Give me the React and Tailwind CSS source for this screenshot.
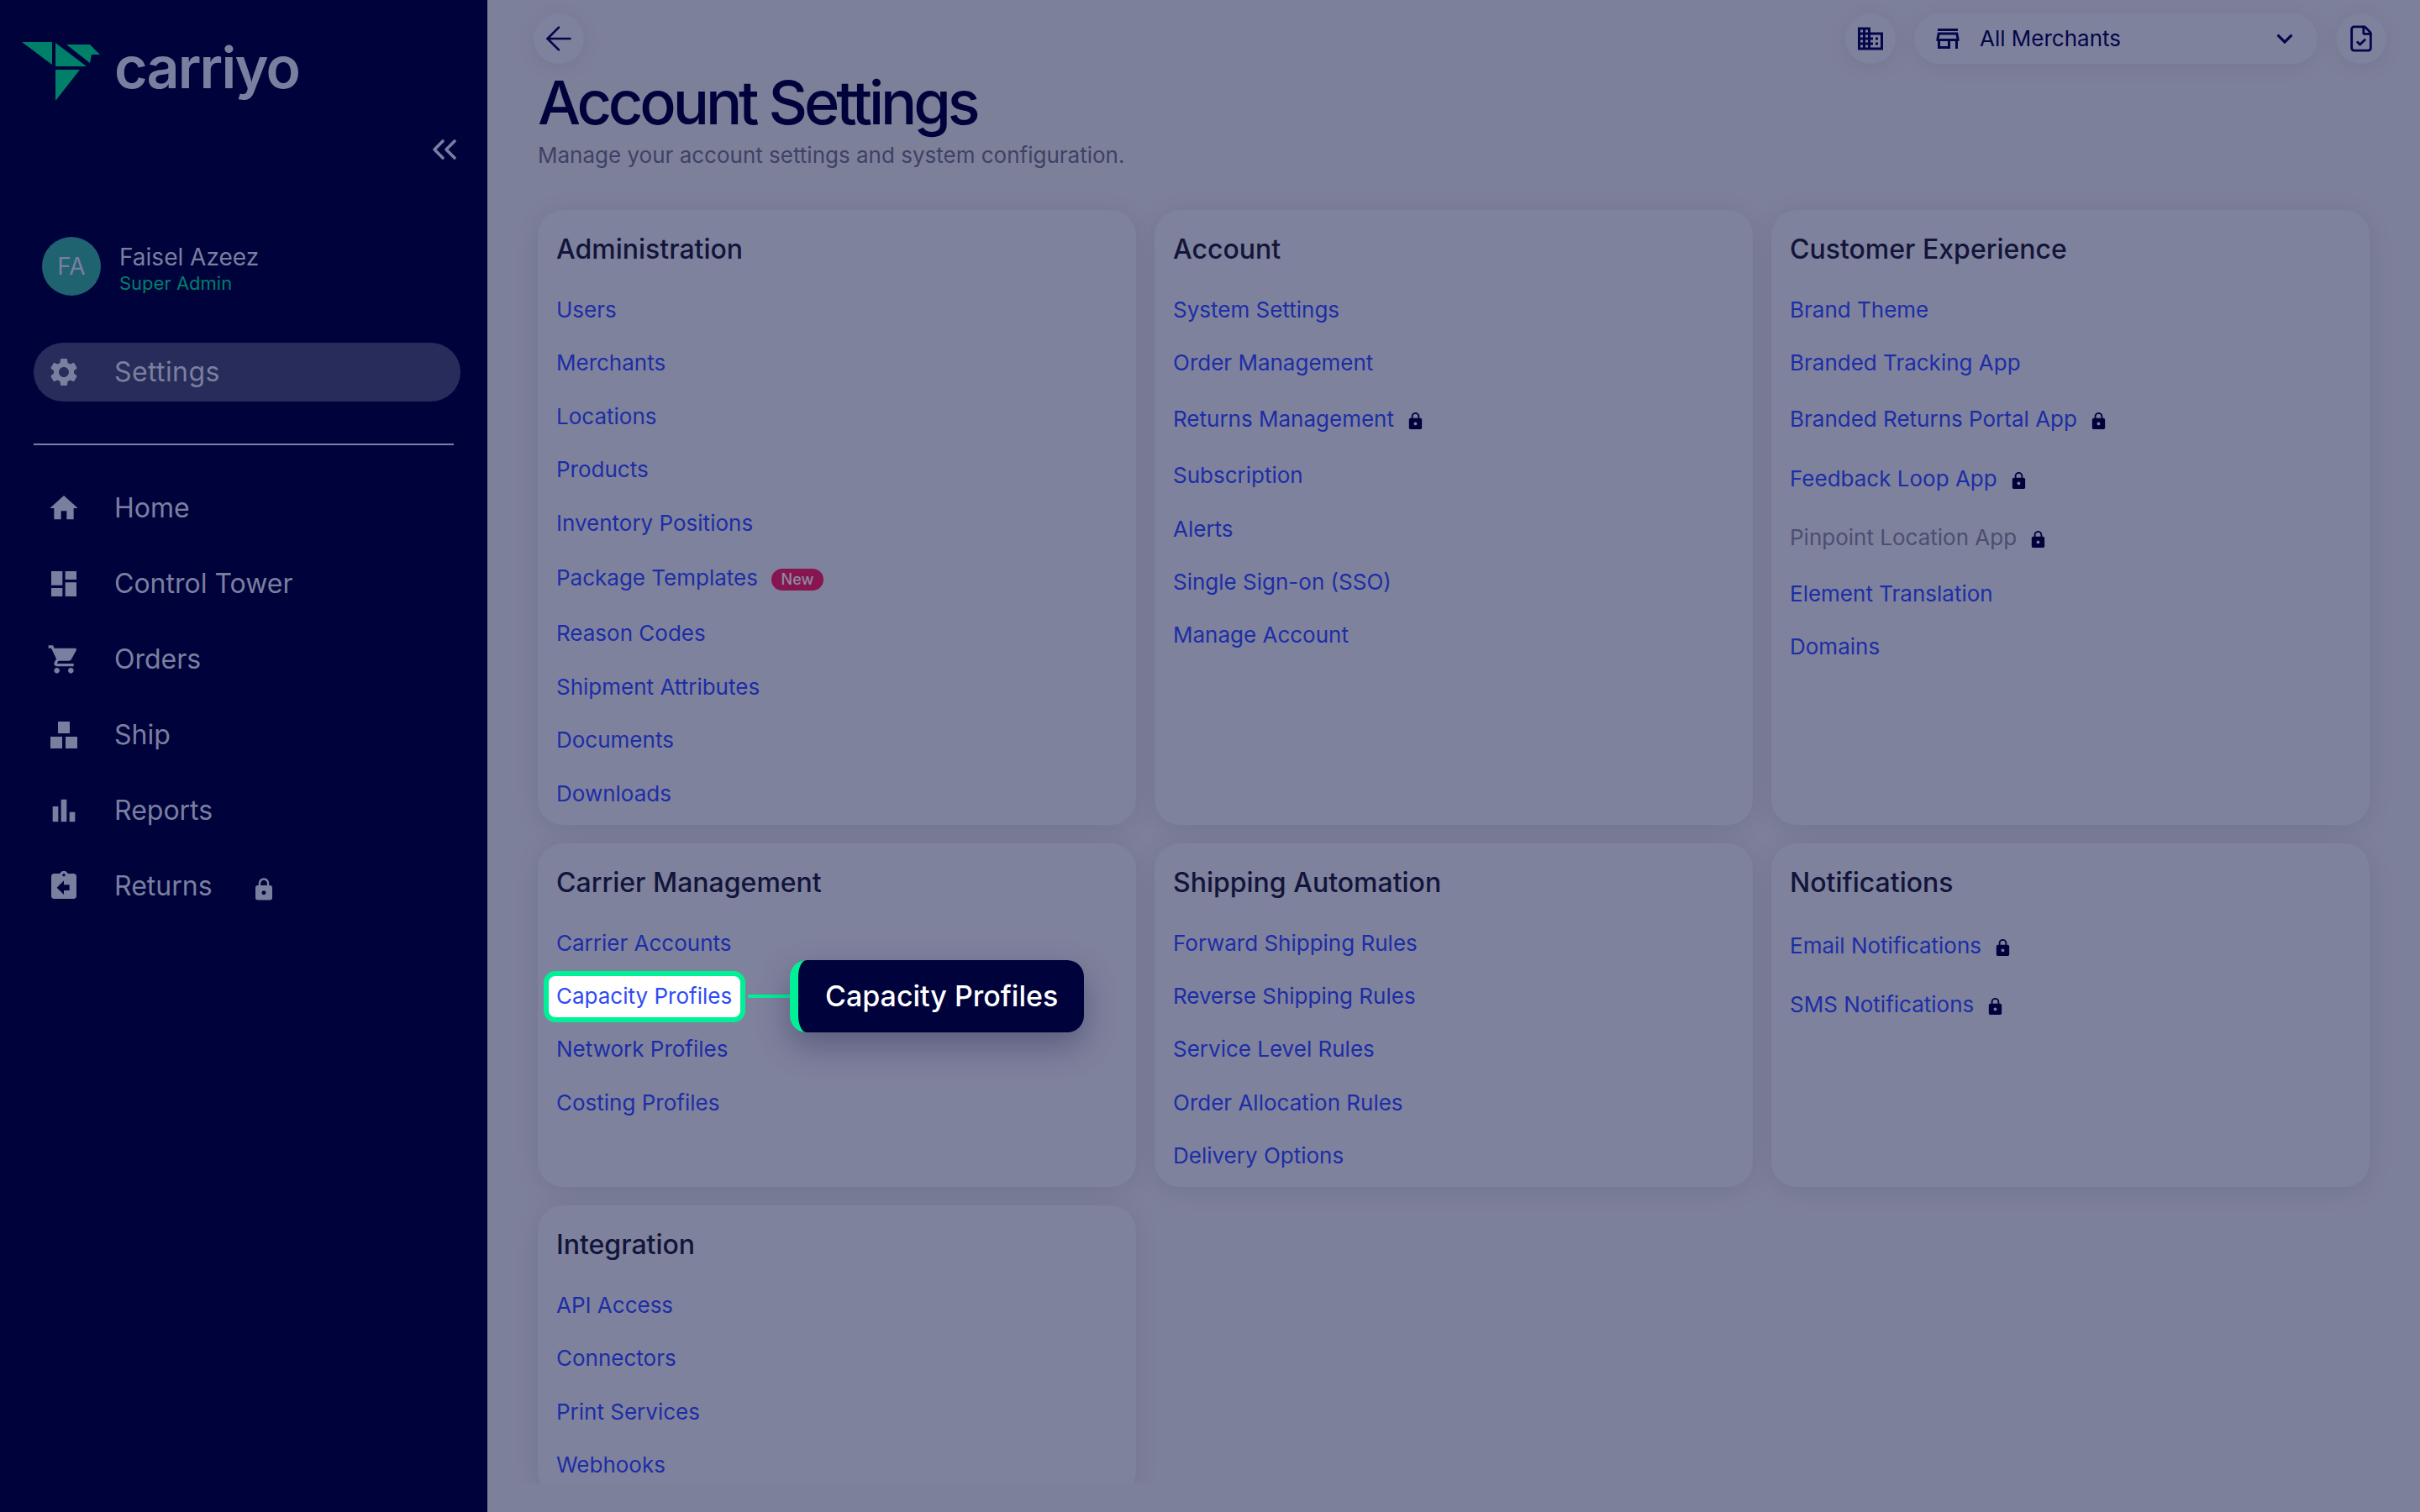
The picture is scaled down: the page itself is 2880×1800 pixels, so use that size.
import { ArrowLeft, ChevronsLeft, FileCheck } from "lucide-react";
import {
  MdAssignmentReturn,
  MdBarChart,
  MdDashboard,
  MdDomain,
  MdExpandMore,
  MdHome,
  MdLock,
  MdOutlineStore,
  MdSettings,
  MdShoppingCart,
} from "react-icons/md";

function ShipIcon() {
  return (
    <svg width="40" height="40" viewBox="-4 -4 40 40" fill="currentColor">
      <rect x="9" y="0" width="14" height="14" />
      <rect x="0" y="18" width="14" height="14" />
      <rect x="18" y="18" width="14" height="14" />
    </svg>
  );
}

const nav = [
  { label: "Home", icon: <MdHome size={40} /> },
  { label: "Control Tower", icon: <MdDashboard size={40} /> },
  { label: "Orders", icon: <MdShoppingCart size={40} /> },
  { label: "Ship", icon: <ShipIcon /> },
  { label: "Reports", icon: <MdBarChart size={40} /> },
  { label: "Returns", icon: <MdAssignmentReturn size={40} />, locked: true },
];

const sections = [
  {
    title: "Administration",
    links: [
      { label: "Users" },
      { label: "Merchants" },
      { label: "Locations" },
      { label: "Products" },
      { label: "Inventory Positions" },
      { label: "Package Templates", badge: "New" },
      { label: "Reason Codes" },
      { label: "Shipment Attributes" },
      { label: "Documents" },
      { label: "Downloads" },
    ],
  },
  {
    title: "Account",
    links: [
      { label: "System Settings" },
      { label: "Order Management" },
      { label: "Returns Management", locked: true },
      { label: "Subscription" },
      { label: "Alerts" },
      { label: "Single Sign-on (SSO)" },
      { label: "Manage Account" },
    ],
  },
  {
    title: "Customer Experience",
    links: [
      { label: "Brand Theme" },
      { label: "Branded Tracking App" },
      { label: "Branded Returns Portal App", locked: true },
      { label: "Feedback Loop App", locked: true },
      { label: "Pinpoint Location App", locked: true, muted: true },
      { label: "Element Translation" },
      { label: "Domains" },
    ],
  },
  {
    title: "Carrier Management",
    links: [
      { label: "Carrier Accounts" },
      { label: "Capacity Profiles", highlight: true },
      { label: "Network Profiles" },
      { label: "Costing Profiles" },
    ],
  },
  {
    title: "Shipping Automation",
    links: [
      { label: "Forward Shipping Rules" },
      { label: "Reverse Shipping Rules" },
      { label: "Service Level Rules" },
      { label: "Order Allocation Rules" },
      { label: "Delivery Options" },
    ],
  },
  {
    title: "Notifications",
    links: [
      { label: "Email Notifications", locked: true },
      { label: "SMS Notifications", locked: true },
    ],
  },
  {
    title: "Integration",
    links: [
      { label: "API Access" },
      { label: "Connectors" },
      { label: "Print Services" },
      { label: "Webhooks" },
    ],
  },
];

function Sidebar() {
  return (
    <aside className="w-[580px] shrink-0 bg-[#00023c] text-[#7b7f9f] flex flex-col">
      {/* Logo */}
      <div className="flex items-start pt-[50px] pl-[26px] h-[120px]">
        <svg width="93" height="70" viewBox="26 50 93 70" fill="#007f69">
          <path d="M26 50H62V77Z" />
          <path d="M66 51L103 79H66Z" />
          <path d="M79 53H107L119 65H109L107 75Z" />
          <path d="M66 83H95L66 120Z" />
        </svg>
        <span className="ml-[17px] -mt-[5px] text-[68px] leading-[70px] font-semibold tracking-[-1.8px]">carriyo</span>
      </div>

      <div className="flex justify-end pr-[27px] mt-[34px] h-[48px]">
        <ChevronsLeft size={48} strokeWidth={1.8} />
      </div>

      {/* User */}
      <div className="flex items-center pl-[50px] mt-[80px] h-[70px]">
        <div className="w-[70px] h-[70px] rounded-full bg-[#1f6270] flex items-center justify-center text-[28px]">FA</div>
        <div className="ml-[22px] mt-[3px] flex flex-col">
          <span className="text-[28px] leading-[36px]">Faisel Azeez</span>
          <span className="text-[22px] leading-[26px] text-[#007f69]">Super Admin</span>
        </div>
      </div>

      <div className="mx-[40px] mt-[56px] h-[70px] w-[508px] rounded-full bg-[#282c5a] flex items-center pl-[16px] gap-[40px] text-[32px]">
        <MdSettings size={40} />
        <span className="tracking-[0.4px]">Settings</span>
      </div>

      <div className="mx-[40px] mt-[50px] h-[2px] w-[500px] bg-[#7b7f9f]" />

      <nav className="mt-[30px] flex flex-col">
        {nav.map(item => (
          <div key={item.label} className="h-[90px] flex items-center pl-[56px] gap-[40px] text-[32px]">
            {item.icon}
            <span>{item.label}</span>
            {item.locked && <MdLock size={30} className="ml-[6px] mt-[8px]" />}
          </div>
        ))}
      </nav>
    </aside>
  );
}

function HeaderButton({ children }) {
  return (
    <button className="w-[60px] h-[60px] rounded-full bg-[#7f829d] shadow-[0_4px_24px_rgba(0,0,50,0.07)] flex items-center justify-center text-[#03064a]">
      {children}
    </button>
  );
}

function SettingsLink({ link }) {
  if (link.highlight) {
    return (
      <div className="relative h-[34px] flex items-center text-[26px] leading-[34px]">
        <span className="relative">
          <span className="absolute -left-[15px] -right-[16px] -top-[13px] -bottom-[14px] rounded-[14px] border-[6px] border-[#00f098] bg-white" />
          <span className="relative text-[#2f4bf5]">{link.label}</span>
        </span>
        <span className="absolute left-[228px] top-1/2 -translate-y-1/2 w-[52px] h-[4px] rounded-full bg-[#00f098]" />
        <div className="absolute left-[278px] top-1/2 -translate-y-1/2 w-[350px] h-[86px] rounded-[20px] border-l-[10px] border-[#00f098] bg-[#00023c] flex items-center pl-[32px] text-[34px] font-medium text-white shadow-[0_16px_40px_rgba(0,0,50,0.3)]">
          {link.label}
        </div>
      </div>
    );
  }

  const rowHeight = link.locked ? "h-[41px]" : link.badge ? "h-[39px]" : "h-[34px]";
  return (
    <div className={`flex items-center text-[26px] leading-[34px] ${rowHeight} ${link.muted ? "text-[#4b4e70]" : "text-[#1c2da6]"}`}>
      <span>{link.label}</span>
      {link.locked && <MdLock size={23} className="ml-[14px] mt-[5px] text-[#00023c]" />}
      {link.badge && (
        <span className="ml-[16px] mt-[4px] w-[62px] h-[26px] rounded-full bg-[#861550] text-[#8a8da5] text-[18px] leading-[26px] text-center font-medium">
          {link.badge}
        </span>
      )}
    </div>
  );
}

function SettingsCard({ section }) {
  return (
    <section className="rounded-[30px] bg-[#7f829d] px-[22px] pt-[23px] pb-[20px] shadow-[0_4px_30px_rgba(0,0,50,0.09)]">
      <h2 className="text-[32px] leading-[48px] font-medium text-[#12143a] mb-[31px]">{section.title}</h2>
      <div className="flex flex-col gap-[29.4px]">
        {section.links.map(link => (
          <SettingsLink key={link.label} link={link} />
        ))}
      </div>
    </section>
  );
}

export default function App() {
  return (
    <div className="flex w-[2880px] h-[1800px] overflow-hidden bg-[#7d8099] font-[Inter,sans-serif]">
      <Sidebar />
      <main className="flex-1 min-w-0 flex flex-col">
        <div className="pt-[16px] pl-[55px] pr-[40px] flex items-center justify-between">
          <HeaderButton>
            <ArrowLeft size={46} strokeWidth={1.4} />
          </HeaderButton>
          <div className="flex items-center gap-[22px]">
            <HeaderButton>
              <MdDomain size={36} />
            </HeaderButton>
            <div className="w-[480px] h-[60px] rounded-full bg-[#7f829d] shadow-[0_4px_24px_rgba(0,0,50,0.07)] flex items-center pl-[22px] pr-[20px] text-[#03064a]">
              <MdOutlineStore size={36} />
              <span className="ml-[20px] -mt-[2px] text-[26px] flex-1">All Merchants</span>
              <MdExpandMore size={38} />
            </div>
            <HeaderButton>
              <FileCheck size={34} strokeWidth={2} />
            </HeaderButton>
          </div>
        </div>

        <div className="pl-[60px] mt-[10px]">
          <h1 className="text-[72px] leading-[72px] font-medium tracking-[-4.1px] text-[#00023c]">Account Settings</h1>
          <p className="mt-[7px] text-[26px] leading-[40px] text-[#3f4166]">Manage your account settings and system configuration.</p>
        </div>

        <div className="flex-1 min-h-0 overflow-hidden mb-[34px] mt-[20px] pt-[25px] px-[60px]">
          <div className="grid grid-cols-3 gap-[22px]">
            {sections.map(section => (
              <SettingsCard key={section.title} section={section} />
            ))}
          </div>
        </div>
      </main>
    </div>
  );
}
